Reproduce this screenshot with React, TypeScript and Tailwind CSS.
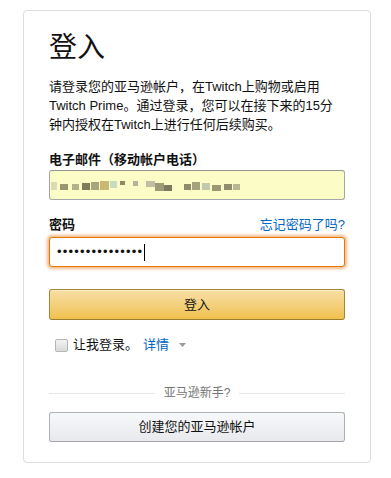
import React from 'react';

// pixelated (blurred) e-mail value: [x, w, colour, h, y]
const blur: [number, number, string, number, number][] = [
  [0, 6, '#dcdcb4', 8, 2],
  [9, 8, '#9a9670', 6, 4],
  [21, 7, '#b4b08a', 6, 4],
  [31, 8, '#7f7c5c', 7, 3],
  [40, 8, '#a9a57c', 8, 2],
  [49, 9, '#cbb873', 9, 1],
  [59, 7, '#c9dcc0', 7, 1],
  [69, 5, '#8d8a66', 4, 1],
  [82, 5, '#b5b39a', 5, 1],
  [95, 9, '#c0bfa4', 6, 1],
  [104, 9, '#9d9a78', 8, 3],
  [113, 8, '#7c7a5d', 6, 5],
  [133, 7, '#8f8c6a', 6, 4],
  [141, 8, '#a5a27e', 8, 2],
  [151, 8, '#c3c9ac', 7, 3],
  [161, 9, '#9b9873', 6, 5],
  [173, 8, '#8f8d6d', 6, 4],
  [182, 7, '#b9b691', 6, 4],
];

export default function App() {
  return (
    <div className="min-h-[478px] w-[391px] bg-white pt-[10px] font-['Liberation_Sans','Noto_Sans_CJK_SC',sans-serif] text-[#111]">
      <div className="ml-[23px] w-[348px] rounded-[4px] border border-[#dddddd] pl-[25px] pr-[25px] pt-[20px] pb-[20px]">
        <h1 className="text-[28px] font-normal leading-[34px] text-[#111]">登入</h1>

        <p className="mt-3 text-[13px] leading-[19px] text-[#111]">
          请登录您的亚马逊帐户，在Twitch上购物或启用<br />
          Twitch Prime。通过登录，您可以在接下来的15分<br />
          钟内授权在Twitch上进行任何后续购买。
        </p>

        <label className="mt-4 block text-[13px] font-bold leading-[20px]">电子邮件（移动帐户电话）</label>
        <div className="flex h-[30px] items-center rounded-[3px] border border-[#a6a6a6] border-t-[#949494] bg-[#fbfcc6] pl-[1px]">
          <svg width="192" height="11" viewBox="0 0 192 11">
            {blur.map(([x, w, c, h, y], i) => (
              <rect key={i} x={x} y={y} width={w} height={h} fill={c} />
            ))}
          </svg>
        </div>

        <div className="mt-[15px] flex items-center justify-between text-[13px] leading-[20px]">
          <span className="font-bold">密码</span>
          <a className="text-[#0066c0]">忘记密码了吗?</a>
        </div>
        <div className="mt-[2px] flex h-[30px] items-center rounded-[3px] border border-[#e77600] bg-white pl-[7px] shadow-[0_0_3px_2px_rgba(228,121,17,0.5)]">
          <span className="text-[13px] leading-[16px] tracking-[1.2px] text-[#111]">•••••••••••••••</span>
          <span className="ml-[1px] h-[17px] w-[1px] bg-black" />
        </div>

        <button className="mt-[22px] flex h-[31px] w-full items-center justify-center rounded-[3px] border border-[#a88734] border-b-[#9c7e31] bg-gradient-to-b from-[#f7dfa5] to-[#f0c14b] text-[13px] text-[#111] shadow-[inset_0_1px_0_rgba(255,255,255,0.4)]">
          登入
        </button>

        <div className="mt-[15px] flex items-center pl-[6px] text-[13px] leading-[20px]">
          <span className="h-[13px] w-[13px] rounded-[2px] border border-[#b5b5b5] bg-gradient-to-b from-[#f4f4f4] to-[#d8d8d8]" />
          <span className="ml-[5px]">让我登录。</span>
          <a className="ml-[5px] text-[#0066c0]">详情</a>
          <svg className="ml-[10px]" width="7" height="5" viewBox="0 0 7 5">
            <path d="M0 0 L7 0 L3.5 4 Z" fill="#999" />
          </svg>
        </div>

        <div className="mt-[30px] flex items-center text-[12px] leading-[16px] text-[#767676]">
          <span className="h-px flex-1 bg-[#e7e7e7]" />
          <span className="px-[9px]">亚马逊新手?</span>
          <span className="h-px flex-1 bg-[#e7e7e7]" />
        </div>

        <button className="mt-[11px] flex h-[30px] w-full items-center justify-center rounded-[3px] border border-[#adb1b8] border-b-[#a2a6ac] bg-gradient-to-b from-[#f7f8fa] to-[#e7e9ec] text-[13px] text-[#111]">
          创建您的亚马逊帐户
        </button>
      </div>
    </div>
  );
}
